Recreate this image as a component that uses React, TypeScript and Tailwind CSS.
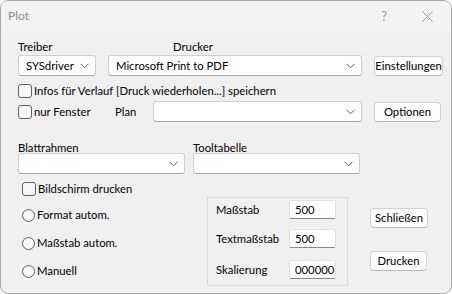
import React from 'react';

const font = { fontFamily: 'Lato, "Noto Sans", sans-serif' };

const Chevron: React.FC = () => (
  <svg width="9" height="6" viewBox="0 0 9 6" className="shrink-0">
    <path d="M0.5 0.8 L4.5 4.8 L8.5 0.8" fill="none" stroke="#5c5c5c" strokeWidth="1" />
  </svg>
);

const Combo: React.FC<{ className: string; value?: string }> = ({ className, value }) => (
  <div
    className={`flex items-center justify-between h-[21px] bg-white border border-[#d0d0d0] border-b-[#a8a8a8] rounded-[3px] pl-[7px] pr-[6px] ${className}`}
  >
    <span className="text-black whitespace-nowrap">{value}</span>
    <Chevron />
  </div>
);

const Button: React.FC<{ className: string; children: React.ReactNode }> = ({ className, children }) => (
  <div
    className={`flex items-center justify-center h-[20px] bg-[#fdfdfd] border border-[#d2d2d2] border-b-[#b8b8b8] rounded-[4px] text-black whitespace-nowrap ${className}`}
  >
    {children}
  </div>
);

const Check: React.FC<{ label: string; className?: string }> = ({ label, className = '' }) => (
  <div className={`flex items-center ${className}`}>
    <div className="w-[14px] h-[14px] rounded-[3px] border border-[#616161] bg-[#f7f7f7] mr-[2px]" />
    <span className="whitespace-nowrap">{label}</span>
  </div>
);

const Radio: React.FC<{ label: string }> = ({ label }) => (
  <div className="flex items-center h-[14px]">
    <div className="w-[13px] h-[13px] rounded-full border border-[#616161] bg-[#f7f7f7] mr-[2px]" />
    <span className="whitespace-nowrap">{label}</span>
  </div>
);

const Field: React.FC<{ label: string; value: string; className?: string }> = ({ label, value, className = '' }) => (
  <div className={`flex items-center justify-between ${className}`}>
    <span>{label}</span>
    <div className="w-[47px] h-[19px] bg-white border border-[#e0e0e0] border-b-[#8a8a8a] rounded-[2px] pl-[5px] flex items-center">
      {value}
    </div>
  </div>
);

export default function App() {
  return (
    <div
      style={font}
      className="w-[452px] h-[294px] bg-[#f0f0f0] border border-[#a9a9a9] rounded-[8px] overflow-hidden flex flex-col text-[11.3px] leading-[14px] text-black"
    >
      {/* Title bar */}
      <div className="h-[30px] shrink-0 flex items-center bg-[#f3f3f3] text-[#8e8e8e]">
        <span className="ml-[7px] text-[12px]">Plot</span>
        <span className="ml-auto mr-[35px] text-[13px] text-[#9a9a9a]">?</span>
        <svg width="11" height="11" viewBox="0 0 11 11" className="mr-[18px]">
          <path d="M0.5 0.5 L10.5 10.5 M10.5 0.5 L0.5 10.5" stroke="#9a9a9a" strokeWidth="1" />
        </svg>
      </div>

      {/* Body */}
      <div className="flex flex-col pl-[17px]">
        {/* Labels row */}
        <div className="flex mt-[9px] h-[14px]">
          <span className="w-[155px]">Treiber</span>
          <span>Drucker</span>
        </div>
        {/* Driver / printer row */}
        <div className="flex items-center mt-[1px]">
          <Combo className="w-[78px]" value="SYSdriver" />
          <Combo className="w-[254px] ml-[12px]" value="Microsoft Print to PDF" />
          <Button className="w-[69px] ml-[12px]">Einstellungen</Button>
        </div>
        <Check label="Infos für Verlauf [Druck wiederholen...] speichern" className="mt-[8px]" />
        {/* Plan row */}
        <div className="flex items-center mt-[3px]">
          <Check label="nur Fenster" className="w-[97px]" />
          <span className="w-[38px]">Plan</span>
          <Combo className="w-[209px]" />
          <Button className="w-[67px] ml-[12px]">Optionen</Button>
        </div>
        {/* Blattrahmen labels */}
        <div className="flex mt-[19px] h-[14px]">
          <span className="w-[175px]">Blattrahmen</span>
          <span>Tooltabelle</span>
        </div>
        <div className="flex items-center mt-[-2px]">
          <Combo className="w-[167px]" />
          <Combo className="w-[167px] ml-[8px]" />
        </div>
        <Check label="Bildschirm drucken" className="mt-[8px] ml-[4px]" />

        {/* Bottom section */}
        <div className="flex mt-[1px]">
          <div className="flex flex-col w-[189px] pl-[4px] pt-[11px] gap-[14px]">
            <Radio label="Format autom." />
            <Radio label="Maßstab autom." />
            <Radio label="Manuell" />
          </div>
          <div className="w-[141px] h-[89px] border border-[#dcdcdc] flex flex-col pl-[8px] pr-[11px] pt-[2px]">
            <Field label="Maßstab" value="500" />
            <Field label="Textmaßstab" value="500" className="mt-[10px]" />
            <Field label="Skalierung" value="000000" className="mt-[12px]" />
          </div>
          <div className="flex flex-col pl-[22px] pt-[11px]">
            <Button className="w-[58px] h-[19px]">Schließen</Button>
            <Button className="w-[57px] mt-[23px]">Drucken</Button>
          </div>
        </div>
      </div>
    </div>
  );
}
